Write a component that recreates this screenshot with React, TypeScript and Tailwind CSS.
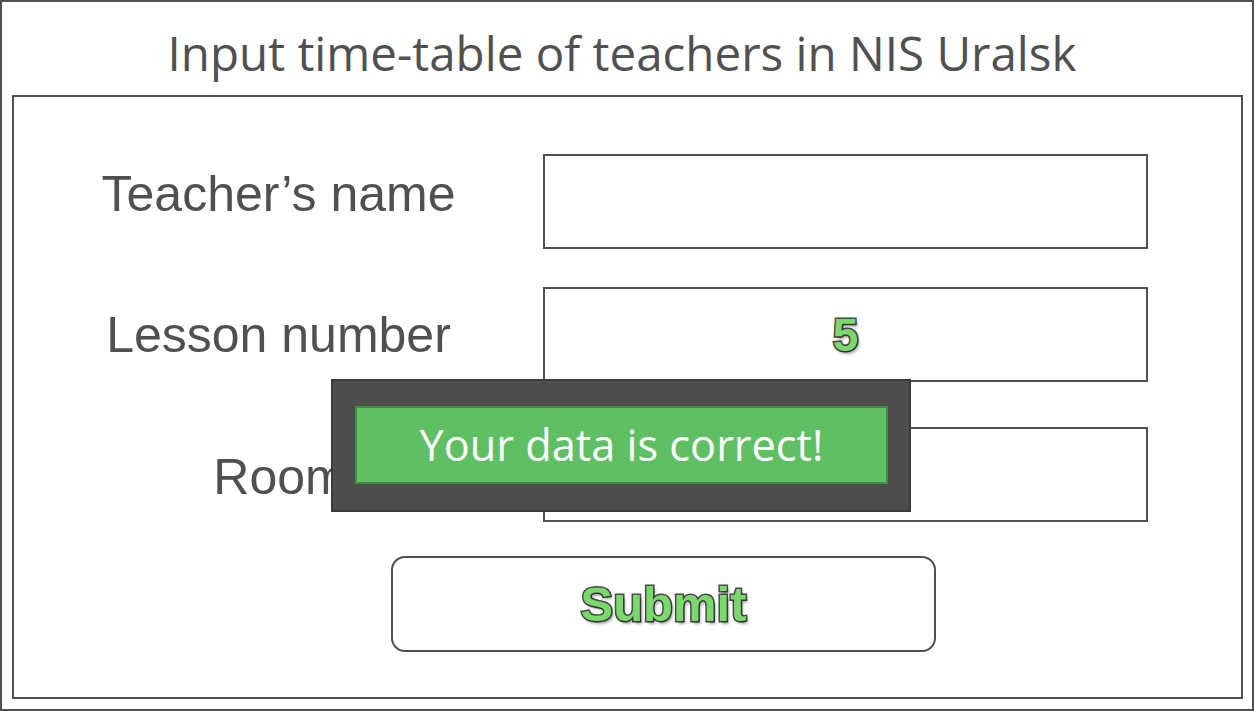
import React from "react";

const outlined =
  "font-bold text-[#7ad86c] [-webkit-text-stroke:3px_#4a4a4a] [paint-order:stroke_fill] [text-shadow:2px_3px_3px_rgba(0,0,0,0.35)]";

export default function App() {
  return (
    <div className="relative w-[1254px] h-[711px] border-2 border-[#505050] bg-white flex flex-col overflow-hidden">
      <div className="h-[93px] flex items-center justify-center pt-[8px] pr-[10px]">
        <h1 className="text-[#505050] text-[47.5px] leading-none font-['Open_Sans',sans-serif]">
          Input time-table of teachers in NIS Uralsk
        </h1>
      </div>
      <div className="ml-[10px] mr-[9px] mb-[10px] flex-1 border-2 border-[#505050] flex flex-col pt-[57px] font-['Liberation_Sans',Arial,sans-serif]">
        <div className="flex items-center">
          <div className="w-[529px] text-center text-[50px] leading-none text-[#505050] mb-[16px]">
            Teacher’s name
          </div>
          <div className="w-[605px] h-[95px] border-2 border-[#505050]"></div>
        </div>
        <div className="flex items-center mt-[38px]">
          <div className="w-[529px] text-center text-[50px] leading-none text-[#505050]">
            Lesson number
          </div>
          <div className="w-[605px] h-[95px] border-2 border-[#505050] flex items-center justify-center">
            <span className={`${outlined} text-[46px] leading-none`}>5</span>
          </div>
        </div>
        <div className="flex items-center mt-[45px]">
          <div className="w-[529px] text-center text-[50px] leading-none text-[#505050] mt-[4px] pl-[3px]">
            Room
          </div>
          <div className="w-[605px] h-[95px] border-2 border-[#505050]"></div>
        </div>
        <div className="mt-[34px] ml-[377px] w-[545px] h-[96px] border-2 border-[#505050] rounded-[14px] flex items-center justify-center">
          <span className={`${outlined} text-[49px] leading-none`}>Submit</span>
        </div>
      </div>

      <div className="absolute left-[329px] top-[377px] w-[580px] h-[133px] bg-[#4d4d4d] border-2 border-[#3b3b3b] pl-[22px] pt-[25px]">
        <div className="w-[533px] h-[78px] bg-[#5fbf63] border-2 border-[#3e8e45] flex items-center justify-center">
          <span className="text-white text-[43.3px] leading-none font-['Open_Sans',sans-serif] pb-[1px]">
            Your data is correct!
          </span>
        </div>
      </div>
    </div>
  );
}
